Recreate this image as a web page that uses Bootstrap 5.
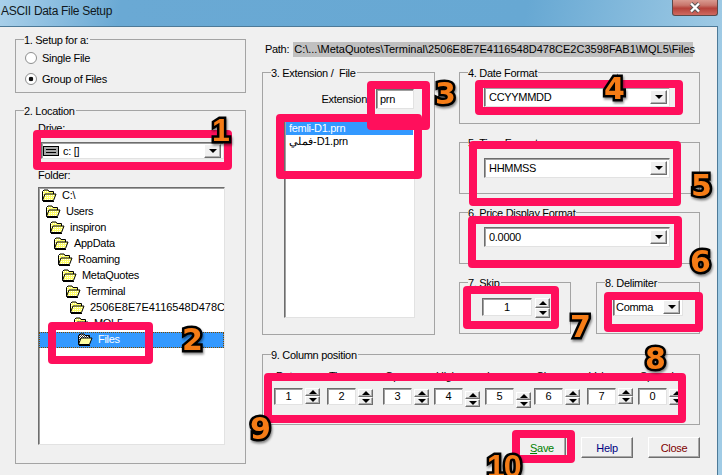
<!DOCTYPE html>
<html lang="en">
<head>
  <meta charset="UTF-8">
  <title>ASCII Data File Setup</title>
  <link href="https://cdn.jsdelivr.net/npm/bootstrap@5.3.0/dist/css/bootstrap.min.css" rel="stylesheet">
  <style>
    html, body {
      width: 722px;
      height: 475px;
      overflow: hidden;
    }
    body {
      position: relative;
      background: linear-gradient(100deg, #a9d0ea 0, #6aa9d4 120px, #67a8d3 520px, #a0cbe5 722px);
      font: 11px/14px "Liberation Sans", Arial, sans-serif;
      letter-spacing: -.3px;
      color: #000;
    }
    .caption {
      height: 26px;
      padding: 4px 0 0 1px;
      font-size: 12px;
      color: #101820;
    }
    .close-x {
      position: absolute;
      left: 672px;
      top: 0;
      width: 46px;
      height: 16px;
      border: 1px solid #5b4a4a;
      border-top: 0;
      border-radius: 0 0 3px 3px;
      background: linear-gradient(#d99a90 0, #c8766c 35%, #b5423a 55%, #cf6a60 100%);
    }
    .client {
      width: 718px;
      height: 449px;
      background: #f0f0f0;
      border-top: 1px solid #4d7a98;
      border-right: 1px solid #4d7a98;
      padding-left: 15px;
    }
    .left-col { width: 231px; padding-top: 4px; }
    .right-col { width: 438px; margin-left: 16px; }
    fieldset.grp {
      border: 1px solid #a4a4a4;
      padding: 0;
      margin: 0;
      min-width: 0;
    }
    /* legend text sits a pixel under the group line, as in the old dialog */
    fieldset.grp > legend {
      float: none;
      width: auto;
      font-size: 11px;
      line-height: 14px;
      margin: 0 0 -2px 8px;
      padding: 2px 1px 0 0;
      white-space: nowrap;
    }
    .g1 { height: 62px; }
    .g1-in { padding: 2px 0 0 9px; }
    .g2 { height: 362px; margin-top: 9px !important; }
    .g2-in { padding: 5px 0 0 22px; }
    .g3 { width: 173px; height: 271px; }
    .g-wide { height: 60px; }
    .g7 { width: 112px; height: 60px; }
    .g8 { width: 104px; height: 60px; }
    .g9 { height: 79px; margin-top: 11px !important; }
    .g9-in { padding: 9px 0 0 11px; }
    .radio-row { height: 21px; gap: 5px; }
    .radio-row .form-check-input {
      width: 12px;
      height: 12px;
      margin: 0;
      border: 1px solid #8e8f8f;
      background: #fff;
      box-shadow: none;
    }
    .radio-row .form-check-input:checked {
      background: radial-gradient(circle, #111 0 2px, #fff 2.6px);
    }
    .sunk {
      background: #fff;
      border: 1px solid;
      border-color: #6d6d6d #e2e2e2 #e2e2e2 #6d6d6d;
      box-shadow: inset 1px 1px 0 #a0a0a0;
    }
    .combo {
      height: 17px;
      padding: 0 2px 0 4px;
    }
    .combo-txt { flex: 1; white-space: nowrap; }
    .bevel {
      background: #f0f0f0;
      border: 1px solid;
      border-color: #fff #6e6e6e #6e6e6e #fff;
      box-shadow: inset -1px -1px 0 #b0b0b0;
    }
    .combo-btn { width: 17px; height: 14px; flex: none; }
    .arrow-d, .arrow-u {
      width: 0;
      height: 0;
      border-left: 4px solid transparent;
      border-right: 4px solid transparent;
    }
    .arrow-d { border-top: 4px solid #000; }
    .arrow-u { border-bottom: 4px solid #000; }
    .drive-combo { width: 183px; margin: 7px 0 9px 3px; gap: 4px; padding-left: 1px; }
    .drive-combo svg { flex: none; }
    .wide-combo { width: 186px; height: 20px; margin: 9px 0 0 24px; }
    .wide-combo.time-combo { margin-top: 10px; }
    .tree {
      width: 187px;
      height: 258px;
      margin-top: 5px;
    }
    .tree-row { height: 16px; gap: 5px; padding-bottom: 2px; white-space: nowrap; overflow: hidden; }
    .tree-row svg { flex: none; }
    .tree-row.sel {
      background: #3399ff;
      color: #fff;
      outline: 1px dotted #7a4a00;
      outline-offset: -1px;
    }
    .tree-row.digits { letter-spacing: 0; }
    .path-row { height: 15px; margin-top: 15px; margin-bottom: 7px; gap: 4px; padding-left: 3px; }
    .path-val { width: 400px; background: #c0c0c0; padding-left: 1px; white-space: nowrap; letter-spacing: 0; }
    .ext-row { padding: 11px 20px 0 0; gap: 9px; }
    .ext-in { width: 38px; height: 20px; padding: 2px 3px; }
    .file-list { width: 131px; height: 198px; margin: 11px 0 0 21px; padding: 1px; }
    .file-row { height: 13px; line-height: 13px; padding-left: 3px; white-space: nowrap; }
    .file-row.sel { background: #3399ff; color: #fff; }
    .stack { width: 241px; gap: 10px; }
    .spin-in { width: 29px; height: 17px; text-align: center; line-height: 14px; }
    .spin { width: 15px; margin-left: 2px; flex: none; }
    .spin i {
      height: 8px;
      display: flex;
      align-items: center;
      justify-content: center;
    }
    .skip-wrap { margin: 10px 0 0 22px; }
    .skip-in { width: 50px; height: 18px; text-align: center; line-height: 16px; }
    .skip-wrap .spin { margin-left: 3px; }
    .skip-wrap .spin i { height: 10px; }
    .delim { width: 70px; height: 18px; margin: 10px 0 0 16px; padding: 0 2px 0 2px; }
    .cp-cell { width: 46px; flex: none; }
    .cp-cell .cp-lbl { padding-left: 2px; height: 14px; margin-bottom: 5px; white-space: nowrap; }
    .cp-cell:nth-child(2) { margin-left: 7px; }
    .cp-cell:nth-child(3) { margin-left: 10px; }
    .cp-cell:nth-child(4) { margin-left: 5px; }
    .cp-cell:nth-child(5) { margin-left: 5px; }
    .cp-cell:nth-child(6) { margin-left: 3px; }
    .cp-cell:nth-child(7) { margin-left: 7px; }
    .cp-cell:nth-child(8) { margin-left: 5px; }
    .cp-cell:nth-child(2) .spin, .cp-cell:nth-child(3) .spin,
    .cp-cell:nth-child(6) .spin, .cp-cell:nth-child(8) .spin { margin-top: 1px; }
    .cp-cell:nth-child(4) .spin { margin-top: 3px; }
    .cp-cell:nth-child(5) .spin { margin-top: 4px; }
    .btn-row { margin-top: 12px; gap: 15px; }
    .btn.win-btn {
      width: 52px;
      height: 21px;
      padding: 0;
      font-size: 11px;
      line-height: 16px;
      letter-spacing: -.3px;
      border-radius: 0;
      background: #f0f0f0;
      border: 1px solid;
      border-color: #fff #6e6e6e #6e6e6e #fff;
      box-shadow: inset -1px -1px 0 #a8a8a8;
    }
    .btn.win-btn.save-c { color: #008000; width: 48px; }
    .btn.win-btn.help-c { color: #000080; }
    .btn.win-btn.close-c { color: #800000; }
    .mark-box {
      position: absolute;
      border: 8px solid #ff0f5c;
      border-radius: 4px;
    }
    .num {
      position: absolute;
      font: 700 30px/32px "DejaVu Sans", sans-serif;
      letter-spacing: 0;
      color: #f57c16;
      -webkit-text-stroke: 5px #000;
      paint-order: stroke fill;
      filter: drop-shadow(1px 2px 1px rgba(0, 0, 0, .45));
    }
    .num.plain-one {
      font-family: "Liberation Sans", sans-serif;
      font-size: 32px;
      letter-spacing: -1px;
    }
    .m1 { left: 33px; top: 130px; width: 199px; height: 40px; }
    .m2 { left: 48px; top: 322px; width: 105px; height: 42px; }
    .m3a { left: 367px; top: 81px; width: 63px; height: 49px; }
    .m3b { left: 276px; top: 114px; width: 146px; height: 65px; }
    .m4 { left: 475px; top: 80px; width: 208px; height: 35px; }
    .m5 { left: 469px; top: 141px; width: 212px; height: 65px; }
    .m6 { left: 468px; top: 216px; width: 214px; height: 52px; }
    .m7 { left: 463px; top: 286px; width: 96px; height: 43px; }
    .m8 { left: 604px; top: 292px; width: 99px; height: 40px; }
    .m9 { left: 264px; top: 373px; width: 422px; height: 50px; }
    .m10 { left: 512px; top: 430px; width: 63px; height: 33px; }
    .n1 { left: 212px; top: 114px; }
    .n2 { left: 182px; top: 324px; }
    .n3 { left: 435px; top: 78px; }
    .n4 { left: 604px; top: 73px; }
    .n5 { left: 691px; top: 170px; }
    .n6 { left: 690px; top: 246px; }
    .n7 { left: 570px; top: 311px; }
    .n8 { left: 645px; top: 343px; }
    .n9 { left: 250px; top: 413px; }
    .n10 { left: 487px; top: 450px; }
  </style>
</head>
<body>
  <svg width="0" height="0" class="position-absolute">
    <defs>
      <pattern id="dith" width="2" height="2" patternUnits="userSpaceOnUse">
        <rect width="2" height="2" fill="#ffff66"/>
        <rect width="1" height="1" fill="#fff"/>
      </pattern>
      <pattern id="dithsel" width="2" height="2" patternUnits="userSpaceOnUse">
        <rect width="2" height="2" fill="#fff"/>
        <rect width="1" height="1" fill="#333"/>
        <rect x="1" y="1" width="1" height="1" fill="#333"/>
      </pattern>
      <symbol id="folder" viewBox="0 0 16 13">
        <path d="M1.5 11.5V2.5L3 1h4l1 1.500h4.500v2.500" fill="url(#dith)" stroke="#000"/>
        <path d="M1.500 11.500L4 5h11l-2.500 6.500z" fill="url(#dith)" stroke="#000"/>
        <path d="M2 12.500h11" stroke="#000"/>
      </symbol>
      <symbol id="folder-sel" viewBox="0 0 16 13">
        <path d="M1.500 11.500V2.500L3 1h4l1 1.500h4.500v2.500" fill="url(#dithsel)" stroke="#000"/>
        <path d="M1.500 11.500L4 5h11l-2.500 6.500z" fill="#ffffa0" stroke="#000"/>
        <path d="M2 12.500h11" stroke="#000"/>
      </symbol>
    </defs>
  </svg>

  <div class="caption">ASCII Data File Setup</div>
  <div class="close-x d-flex align-items-center justify-content-center">
    <svg width="12" height="11" viewBox="0 0 12 11">
      <path d="M2 1.500l8 8M10 1.500l-8 8" stroke="#555" stroke-width="4"/>
      <path d="M2 1.500l8 8M10 1.500l-8 8" stroke="#fff" stroke-width="2.400"/>
    </svg>
  </div>

  <div class="client d-flex">
    <div class="left-col">
      <fieldset class="grp g1">
        <legend>1. Setup for a:</legend>
        <div class="g1-in">
          <label class="radio-row d-flex align-items-center"><input class="form-check-input" type="radio" name="kind">Single File</label>
          <label class="radio-row d-flex align-items-center"><input class="form-check-input" type="radio" name="kind" checked>Group of Files</label>
        </div>
      </fieldset>
      <fieldset class="grp g2">
        <legend>2. Location</legend>
        <div class="g2-in">
          <div>Drive:</div>
          <div class="sunk combo drive-combo d-flex align-items-center">
            <svg width="16" height="10" viewBox="0 0 16 10">
              <rect x=".5" y=".5" width="15" height="9" fill="#a8a8a8" stroke="#000"/>
              <path d="M3 3.500h10M3 6.500h10" stroke="#000"/>
            </svg>
            <span class="combo-txt">c: []</span>
            <span class="bevel combo-btn d-flex align-items-center justify-content-center"><span class="arrow-d"></span></span>
          </div>
          <div>Folder:</div>
          <div class="sunk tree">
            <div class="tree-row d-flex align-items-center" style="padding-left:2px"><svg width="16" height="13"><use href="#folder"/></svg>C:\</div>
            <div class="tree-row d-flex align-items-center" style="padding-left:6px"><svg width="16" height="13"><use href="#folder"/></svg>Users</div>
            <div class="tree-row d-flex align-items-center" style="padding-left:10px"><svg width="16" height="13"><use href="#folder"/></svg>inspiron</div>
            <div class="tree-row d-flex align-items-center" style="padding-left:14px"><svg width="16" height="13"><use href="#folder"/></svg>AppData</div>
            <div class="tree-row d-flex align-items-center" style="padding-left:18px"><svg width="16" height="13"><use href="#folder"/></svg>Roaming</div>
            <div class="tree-row d-flex align-items-center" style="padding-left:22px"><svg width="16" height="13"><use href="#folder"/></svg>MetaQuotes</div>
            <div class="tree-row d-flex align-items-center" style="padding-left:26px"><svg width="16" height="13"><use href="#folder"/></svg>Terminal</div>
            <div class="tree-row digits d-flex align-items-center" style="padding-left:30px"><svg width="16" height="13"><use href="#folder"/></svg>2506E8E7E4116548D478CE2C3598FAB1</div>
            <div class="tree-row d-flex align-items-center" style="padding-left:34px"><svg width="16" height="13"><use href="#folder"/></svg>MQL5</div>
            <div class="tree-row sel d-flex align-items-center" style="padding-left:38px"><svg width="16" height="13"><use href="#folder-sel"/></svg>Files</div>
          </div>
        </div>
      </fieldset>
    </div>

    <div class="right-col">
      <div class="path-row d-flex">
        <span>Path:</span>
        <span class="path-val">C:\...\MetaQuotes\Terminal\2506E8E7E4116548D478CE2C3598FAB1\MQL5\Files</span>
      </div>
      <div class="d-flex justify-content-between">
        <fieldset class="grp g3">
          <legend>3. Extension /&nbsp; File</legend>
          <div class="ext-row d-flex justify-content-end align-items-center">
            <span>Extension</span>
            <div class="sunk ext-in">prn</div>
          </div>
          <div class="sunk file-list">
            <div class="file-row sel">femli-D1.prn</div>
            <div class="file-row">فملي-D1.prn</div>
          </div>
        </fieldset>
        <div class="stack d-flex flex-column">
          <fieldset class="grp g-wide">
            <legend>4. Date Format</legend>
            <div class="sunk combo wide-combo d-flex align-items-center">
              <span class="combo-txt">CCYYMMDD</span>
              <span class="bevel combo-btn d-flex align-items-center justify-content-center"><span class="arrow-d"></span></span>
            </div>
          </fieldset>
          <fieldset class="grp g-wide">
            <legend>5. Time Format</legend>
            <div class="sunk combo wide-combo time-combo d-flex align-items-center">
              <span class="combo-txt">HHMMSS</span>
              <span class="bevel combo-btn d-flex align-items-center justify-content-center"><span class="arrow-d"></span></span>
            </div>
          </fieldset>
          <fieldset class="grp g-wide">
            <legend>6. Price Display Format</legend>
            <div class="sunk combo wide-combo d-flex align-items-center">
              <span class="combo-txt">0.0000</span>
              <span class="bevel combo-btn d-flex align-items-center justify-content-center"><span class="arrow-d"></span></span>
            </div>
          </fieldset>
          <div class="d-flex justify-content-between">
            <fieldset class="grp g7">
              <legend>7. Skip</legend>
              <div class="skip-wrap d-flex">
                <div class="sunk skip-in">1</div>
                <div class="spin">
                  <i class="bevel"><span class="arrow-u"></span></i>
                  <i class="bevel"><span class="arrow-d"></span></i>
                </div>
              </div>
            </fieldset>
            <fieldset class="grp g8">
              <legend>8. Delimiter</legend>
              <div class="sunk combo delim d-flex align-items-center">
                <span class="combo-txt">Comma</span>
                <span class="bevel combo-btn d-flex align-items-center justify-content-center"><span class="arrow-d"></span></span>
              </div>
            </fieldset>
          </div>
        </div>
      </div>

      <fieldset class="grp g9">
        <legend>9. Column position</legend>
        <div class="g9-in d-flex">
          <div class="cp-cell"><div class="cp-lbl">Date</div><div class="d-flex align-items-start"><div class="sunk spin-in">1</div><div class="spin"><i class="bevel"><span class="arrow-u"></span></i><i class="bevel"><span class="arrow-d"></span></i></div></div></div>
          <div class="cp-cell"><div class="cp-lbl">Time</div><div class="d-flex align-items-start"><div class="sunk spin-in">2</div><div class="spin"><i class="bevel"><span class="arrow-u"></span></i><i class="bevel"><span class="arrow-d"></span></i></div></div></div>
          <div class="cp-cell"><div class="cp-lbl">Open</div><div class="d-flex align-items-start"><div class="sunk spin-in">3</div><div class="spin"><i class="bevel"><span class="arrow-u"></span></i><i class="bevel"><span class="arrow-d"></span></i></div></div></div>
          <div class="cp-cell"><div class="cp-lbl">High</div><div class="d-flex align-items-start"><div class="sunk spin-in">4</div><div class="spin"><i class="bevel"><span class="arrow-u"></span></i><i class="bevel"><span class="arrow-d"></span></i></div></div></div>
          <div class="cp-cell"><div class="cp-lbl">Low</div><div class="d-flex align-items-start"><div class="sunk spin-in">5</div><div class="spin"><i class="bevel"><span class="arrow-u"></span></i><i class="bevel"><span class="arrow-d"></span></i></div></div></div>
          <div class="cp-cell"><div class="cp-lbl">Close</div><div class="d-flex align-items-start"><div class="sunk spin-in">6</div><div class="spin"><i class="bevel"><span class="arrow-u"></span></i><i class="bevel"><span class="arrow-d"></span></i></div></div></div>
          <div class="cp-cell"><div class="cp-lbl">Volume</div><div class="d-flex align-items-start"><div class="sunk spin-in">7</div><div class="spin"><i class="bevel"><span class="arrow-u"></span></i><i class="bevel"><span class="arrow-d"></span></i></div></div></div>
          <div class="cp-cell"><div class="cp-lbl">Spread</div><div class="d-flex align-items-start"><div class="sunk spin-in">0</div><div class="spin"><i class="bevel"><span class="arrow-u"></span></i><i class="bevel"><span class="arrow-d"></span></i></div></div></div>
        </div>
      </fieldset>

      <div class="btn-row d-flex justify-content-end">
        <button class="btn win-btn save-c"><u>S</u>ave</button>
        <button class="btn win-btn help-c">Help</button>
        <button class="btn win-btn close-c">Close</button>
      </div>
    </div>
  </div>

  <!-- pink annotations on top of the dialog -->
  <div class="mark-box m1"></div>
  <div class="mark-box m2"></div>
  <div class="mark-box m3b"></div>
  <div class="mark-box m3a"></div>
  <div class="mark-box m4"></div>
  <div class="mark-box m5"></div>
  <div class="mark-box m6"></div>
  <div class="mark-box m7"></div>
  <div class="mark-box m8"></div>
  <div class="mark-box m9"></div>
  <div class="mark-box m10"></div>
  <span class="num plain-one n1">1</span>
  <span class="num n2">2</span>
  <span class="num n3">3</span>
  <span class="num n4">4</span>
  <span class="num n5">5</span>
  <span class="num n6">6</span>
  <span class="num n7">7</span>
  <span class="num n8">8</span>
  <span class="num n9">9</span>
  <span class="num plain-one n10">10</span>
</body>
</html>
